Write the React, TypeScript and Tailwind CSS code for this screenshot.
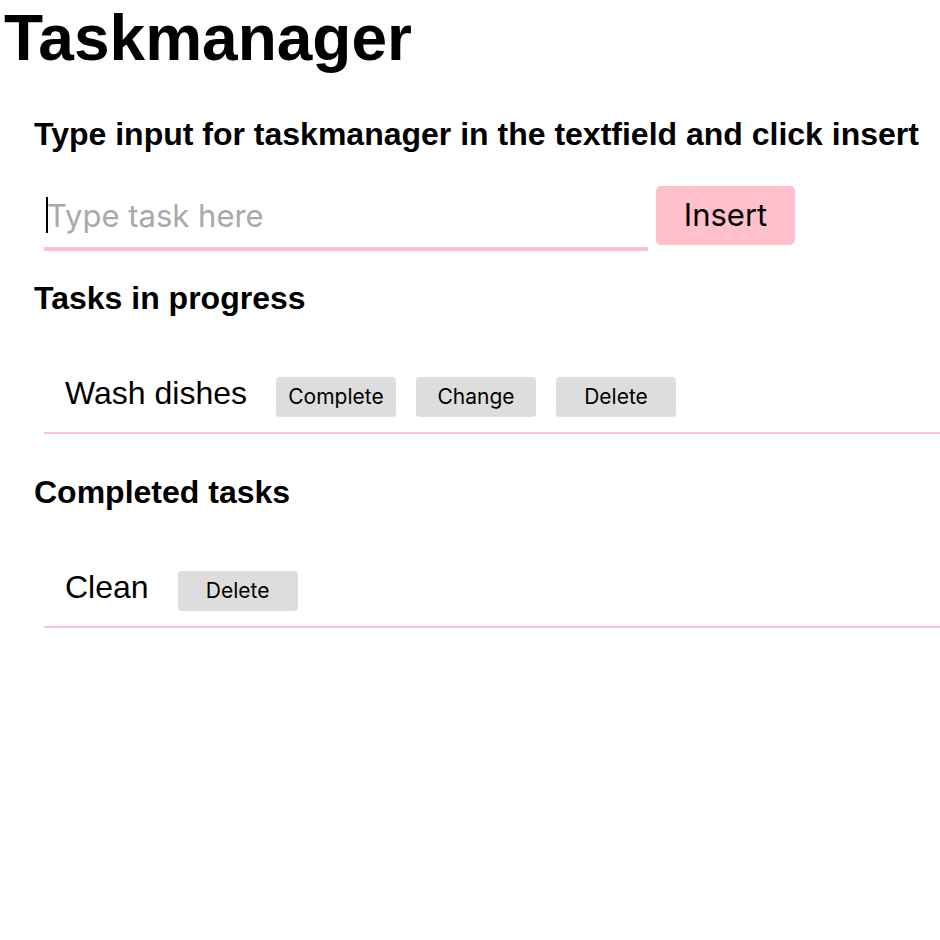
const pink = "bg-[#ffc0cb]";

type Task = { id: number; name: string };

const inProgress: Task[] = [{ id: 1, name: "Wash dishes" }];
const completed: Task[] = [{ id: 2, name: "Clean" }];

function SmallButton({ label }: { label: string }) {
  return (
    <button className="w-[120px] h-[40px] rounded-[4px] bg-[#dddddd] text-[21px] text-black font-['Inter',sans-serif]">
      {label}
    </button>
  );
}

function TaskRow({ task, actions }: { task: Task; actions: string[] }) {
  return (
    <div className="ml-[10px] mt-[58px] pl-[21px] pb-[15px] border-b-2 border-[#ffc0cb] flex items-baseline">
      <span className="text-[32px] leading-[37px] mr-[29px]">{task.name}</span>
      <div className="flex items-baseline gap-[20px]">
        {actions.map((a) => (
          <SmallButton key={a} label={a} />
        ))}
      </div>
    </div>
  );
}

export default function App() {
  return (
    <div className="w-[940px] min-h-[940px] bg-white text-black font-['Liberation_Sans',Arial,sans-serif]">
      <h1 className="text-[64px] font-bold leading-[74px] pt-[1px] pl-[4px]">Taskmanager</h1>

      <div className="pl-[34px]">
        <h4 className="text-[32px] font-bold leading-[37px] mt-[41px]">
          Type input for taskmanager in the textfield and click insert
        </h4>

        {/* Input row */}
        <div className="flex items-start mt-[33px] ml-[10px]">
          <div className="relative mt-[16px]">
            <input
              type="text"
              placeholder="Type task here"
              className="w-[604px] h-[49px] pl-[3px] pb-[18px] border-b-4 border-[#ffc0cb] outline-none text-[31px] font-['Inter',sans-serif] placeholder:text-[#a9a9a9]"
            />
            <span className="absolute left-[2px] top-[-5px] w-[2px] h-[36px] bg-black" />
          </div>
          <button
            className={`ml-[8px] w-[139px] h-[59px] rounded-[5px] ${pink} text-[31px] font-['Inter',sans-serif] text-black`}
          >
            Insert
          </button>
        </div>

        <h4 className="text-[32px] font-bold leading-[37px] mt-[29px]">Tasks in progress</h4>
        {inProgress.map((t) => (
          <TaskRow key={t.id} task={t} actions={["Complete", "Change", "Delete"]} />
        ))}

        <h4 className="text-[32px] font-bold leading-[37px] mt-[40px]">Completed tasks</h4>
        {completed.map((t) => (
          <TaskRow key={t.id} task={t} actions={["Delete"]} />
        ))}
      </div>
    </div>
  );
}
